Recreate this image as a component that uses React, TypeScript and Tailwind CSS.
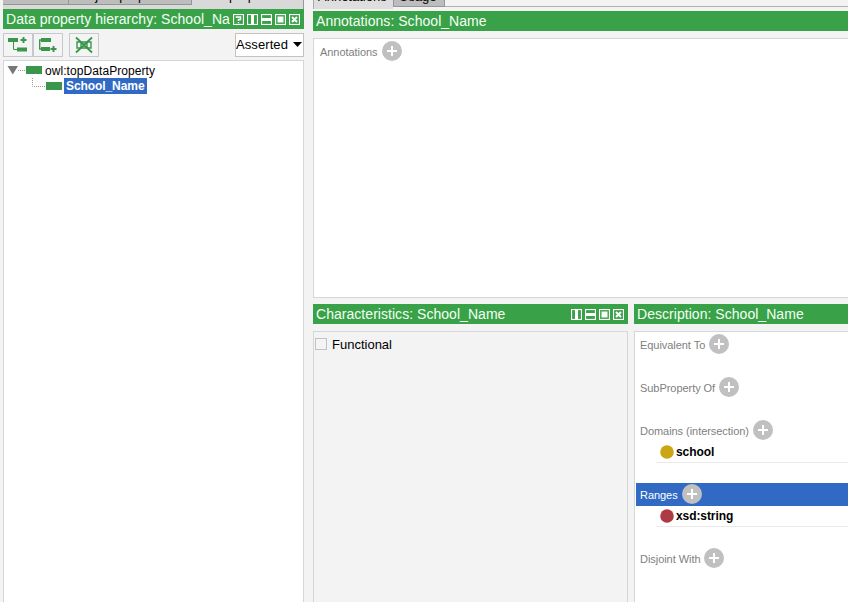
import React from "react";

type HeaderIcon = "help" | "columns" | "rows" | "float" | "close";

const headerGlyphs: Record<HeaderIcon, React.ReactNode> = {
  help: <path d="M3.5 4V3h4v2.500h-2V7M5.500 8v1.200" strokeWidth="1.500" />,
  columns: <path d="M5.500 1v9" strokeWidth="3" />,
  rows: <path d="M1 5.500h9" strokeWidth="3" />,
  float: <path d="M2.500 2.500h6v6h-6z" fill="white" stroke="none" />,
  close: <path d="M3 3l5 5M8 3L3 8" strokeWidth="2" />,
};

function HeaderButton({ icon }: { icon: HeaderIcon }) {
  return (
    <svg width="11" height="11" viewBox="0 0 11 11" fill="none" stroke="white" className="shrink-0">
      <rect x="0.5" y="0.5" width="10" height="10" strokeWidth="1.200" />
      {headerGlyphs[icon]}
    </svg>
  );
}

function TitleBar({ title, icons = [] }: { title: string; icons?: HeaderIcon[] }) {
  return (
    <div className="flex h-5 shrink-0 items-center bg-[#39a249] pl-[3px] pr-[4px] text-[14px] leading-5 tracking-[0.04px] text-[#f4fff4]">
      <span className="min-w-0 flex-1 overflow-hidden whitespace-nowrap">{title}</span>
      <span className="flex gap-[3px] pl-[3px]">
        {icons.map((icon) => (
          <HeaderButton key={icon} icon={icon} />
        ))}
      </span>
    </div>
  );
}

function AddButton({ raised }: { raised: boolean }) {
  return (
    <svg width="20" height="20" viewBox="0 0 20 20" className={raised ? "mb-[2px] shrink-0" : "shrink-0"}>
      <circle cx="10" cy="10" r="10" fill="#c0c0c0" />
      <path d="M10 5v10M5 10h10" stroke="white" strokeWidth="2" />
    </svg>
  );
}

function Section({ label, selected = false }: { label: string; selected?: boolean }) {
  return (
    <div
      className={`flex h-[23px] items-center gap-[4px] pl-[4px] text-[11px] ${
        selected ? "bg-[#306ac5] text-white" : "text-[#808080]"
      }`}
    >
      <span className={`whitespace-nowrap tracking-[-0.05px] ${selected ? "pt-[2px]" : "pt-[4px]"}`}>{label}</span>
      <AddButton raised={selected} />
    </div>
  );
}

function Item({ label, color }: { label: string; color: string }) {
  return (
    <div className="ml-[20px] flex h-[21px] items-center gap-[2px] border-b border-[#e9e9e9] pl-[4px] text-[12px] font-bold text-black">
      <svg width="14" height="14" viewBox="0 0 14 14">
        <circle cx="7" cy="7" r="6.8" fill={color} />
      </svg>
      <span className="tracking-[-0.08px]">{label}</span>
    </div>
  );
}

function ToolButton({ children }: { children: React.ReactNode }) {
  return (
    <div className="flex h-6 w-[30px] items-center justify-center border border-[#c5c8cd] bg-[#f4f4f4]">
      <svg width="20" height="18" viewBox="0 0 20 18" fill="none" stroke="#39964a">
        {children}
      </svg>
    </div>
  );
}

function HierarchyPanel() {
  return (
    <aside className="flex w-[301px] shrink-0 flex-col">
      <div className="flex h-[9px] shrink-0 items-start overflow-hidden border-r border-[#999] bg-[#d9d9d9] text-[13px] text-black">
        <div className="h-[5px] w-[66px] border-b border-r border-[#969696] bg-[#bdbdbd]" />
        <div className="h-[5px] w-[123px] overflow-hidden border-b border-r border-[#969696] bg-[#bdbdbd] pl-[9px]">
          <span className="-mt-[12px] block whitespace-nowrap leading-[15px]">Object properties</span>
        </div>
        <span className="-mt-[12px] pl-[6px] leading-[15px]">Data properties</span>
      </div>
      <TitleBar title="Data property hierarchy: School_Name" icons={["help", "columns", "rows", "float", "close"]} />
      <div className="flex h-[31px] shrink-0 items-center">
        <ToolButton>
          <path d="M0 4h10M9 13.500h10" strokeWidth="4" />
          <path d="M5.500 5v8.500H10" />
          <path d="M15.500 1v6M12.500 4h6" strokeWidth="2" />
        </ToolButton>
        <ToolButton>
          <path d="M3 4h10M3 13h9" strokeWidth="4" />
          <path d="M4 4H1.700v9H4" strokeWidth="1.400" />
          <path d="M15.500 10v6M12.500 13h6" strokeWidth="2" />
        </ToolButton>
        <div className="ml-[6px]">
          <ToolButton>
            <path d="M3 6h4v6H3zM13 6h4v6h-4zM7 6l6 6M7 12l6-6M7 6h6M7 12h6" strokeWidth="1.400" />
            <path d="M2 1.500l16 15M18 1.500L2 16.500" strokeWidth="1.800" />
          </ToolButton>
        </div>
        <div className="ml-auto flex h-6 w-[69px] items-center justify-between border border-[#c3c3c3] bg-white pr-px text-[13px] text-black">
          <span className="tracking-[0.08px]">Asserted</span>
          <svg width="9" height="5" viewBox="0 0 9 5">
            <path d="M0 0h9L4.500 5z" />
          </svg>
        </div>
      </div>
      <div className="flex flex-1 flex-col border border-b-0 border-[#d4d7da] bg-white pl-[3px] pt-px text-[12px] text-black">
        <div className="flex h-4 items-center">
          <svg width="38" height="16" viewBox="0 0 38 16" className="shrink-0">
            <path d="M0.500 4h10.500L5.800 12.500z" fill="#777" />
            <path d="M11 8.500h7" stroke="#999" strokeDasharray="1 1" />
            <path d="M19 4h16v8H19z" fill="#39964a" />
          </svg>
          <span className="pt-px tracking-[0.07px]">owl:topDataProperty</span>
        </div>
        <div className="flex h-4 items-center">
          <svg width="57" height="16" viewBox="0 0 57 16" className="shrink-0">
            <path d="M25.500 0v8.500H38" fill="none" stroke="#999" strokeDasharray="1 1" />
            <path d="M39 4h16v8H39z" fill="#39964a" />
          </svg>
          <span className="h-4 w-[83px] whitespace-nowrap bg-[#306ac5] pl-[2px] font-bold leading-[17px] tracking-[-0.08px] text-white">
            School_Name
          </span>
        </div>
      </div>
    </aside>
  );
}

function DetailTabs() {
  return (
    <div className="flex h-[11px] shrink-0 items-start overflow-hidden text-[13px] text-black">
      <div className="h-[9px] w-[80px] border-l border-[#aaa] bg-[#dedede] pl-[4px]">
        <span className="-mt-[11px] block leading-[15px]">Annotations</span>
      </div>
      <div className="h-[7px] w-[52px] border border-t-0 border-[#969696] bg-[#bdbdbd] pl-[5px]">
        <span className="-mt-[11px] block leading-[15px]">Usage</span>
      </div>
      <div className="mt-[6px] h-px flex-1 bg-[#b0b0b0]" />
    </div>
  );
}

export default function App() {
  return (
    <main className="flex h-[602px] w-[848px] overflow-hidden bg-[#f3f3f3] pl-[3px] font-['Liberation_Sans',Arial,sans-serif]">
      <HierarchyPanel />
      <div className="ml-[9px] flex min-w-0 flex-1 flex-col">
        <DetailTabs />
        <TitleBar title="Annotations: School_Name" />
        <section className="mt-[7px] h-[260px] shrink-0 border border-r-0 border-[#d4d7da] bg-white pl-[2px]">
          <Section label="Annotations" />
        </section>
        <div className="mt-[6px] flex min-h-0 flex-1 gap-[6px]">
          <section className="flex w-[315px] shrink-0 flex-col">
            <TitleBar title="Characteristics: School_Name" icons={["columns", "rows", "float", "close"]} />
            <div className="mt-[7px] flex flex-1 items-start border border-b-0 border-[#d4d7da] bg-[#f3f3f3] pl-px pt-[6px]">
              <span className="h-3 w-3 border border-[#bfc3c7] bg-[#f4f4f4]" />
              <span className="ml-[5px] text-[13px] leading-[13px] text-black">Functional</span>
            </div>
          </section>
          <section className="flex min-w-0 flex-1 flex-col">
            <TitleBar title="Description: School_Name" />
            <div className="mt-[7px] flex-1 border border-b-0 border-r-0 border-[#d4d7da] bg-white pl-px">
              <Section label="Equivalent To" />
              <div className="h-5" />
              <Section label="SubProperty Of" />
              <div className="h-5" />
              <Section label="Domains (intersection)" />
              <div className="pt-px">
                <Item label="school" color="#cca512" />
              </div>
              <div className="h-5" />
              <Section label="Ranges" selected />
              <Item label="xsd:string" color="#ad3b45" />
              <div className="h-[19px]" />
              <Section label="Disjoint With" />
            </div>
          </section>
        </div>
      </div>
    </main>
  );
}
